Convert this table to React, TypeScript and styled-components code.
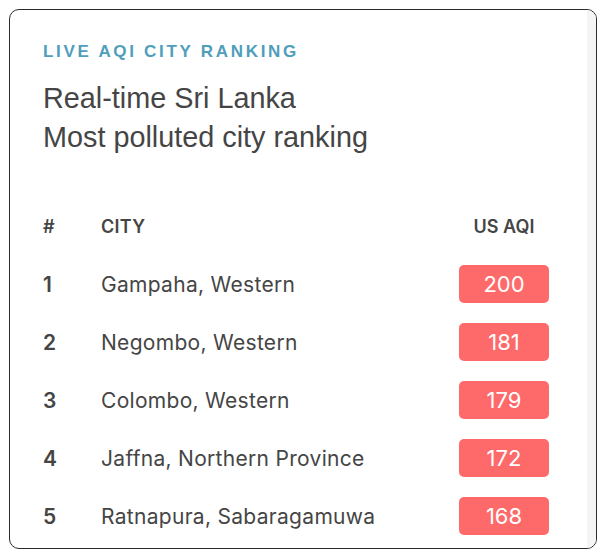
import { createGlobalStyle, styled } from "styled-components";

type CityRow = {
  rank: number;
  city: string;
  aqi: number;
};

const rows: CityRow[] = [
  { rank: 1, city: "Gampaha, Western", aqi: 200 },
  { rank: 2, city: "Negombo, Western", aqi: 181 },
  { rank: 3, city: "Colombo, Western", aqi: 179 },
  { rank: 4, city: "Jaffna, Northern Province", aqi: 172 },
  { rank: 5, city: "Ratnapura, Sabaragamuwa", aqi: 168 },
];

const App = () => {
  return (
    <>
      <GlobalStyle />
      <Card>
        <Content>
          <Eyebrow>LIVE AQI CITY RANKING</Eyebrow>
          <Title>
            Real-time Sri Lanka
            <br />
            Most polluted city ranking
          </Title>
          <Table>
            <HeadRow>
              <RankCell>#</RankCell>
              <CityCell>CITY</CityCell>
              <AqiCell>US AQI</AqiCell>
            </HeadRow>
            {rows.map((row) => (
              <BodyRow key={row.rank}>
                <RankCell>{row.rank}</RankCell>
                <CityCell>{row.city}</CityCell>
                <AqiCell>
                  <AqiBadge>{row.aqi}</AqiBadge>
                </AqiCell>
              </BodyRow>
            ))}
          </Table>
        </Content>
        <Gutter />
      </Card>
    </>
  );
};

export default App;

const GlobalStyle = createGlobalStyle`
  html, body {
    margin: 0;
    padding: 0;
    background: #ffffff;
  }
  body {
    font-family: "Liberation Sans", Arial, sans-serif;
  }
`;

const Card = styled.div`
  margin: 9px;
  width: 588px;
  height: 540px;
  box-sizing: border-box;
  border: 1px solid #2b2b2b;
  border-radius: 10px;
  overflow: hidden;
  display: flex;
  background: #ffffff;
`;

const Content = styled.div`
  flex: 1;
  padding: 32px 38px 0 33px;
  display: flex;
  flex-direction: column;
`;

const Gutter = styled.div`
  width: 9px;
  background: #f5f5f5;
`;

const Eyebrow = styled.div`
  font-family: "Liberation Sans", Arial, sans-serif;
  font-size: 17px;
  line-height: 20px;
  font-weight: 700;
  letter-spacing: 2.7px;
  color: #4f9ebb;
`;

const Title = styled.h1`
  margin: 17px 0 0;
  font-family: "Liberation Sans", Arial, sans-serif;
  font-size: 28.8px;
  line-height: 39px;
  font-weight: 400;
  color: #454545;
`;

const Table = styled.div`
  margin-top: 40px;
  display: flex;
  flex-direction: column;
  font-family: Inter, "Noto Sans", sans-serif;
  color: #454545;
`;

const Row = styled.div`
  height: 58px;
  display: grid;
  grid-template-columns: 58px 1fr 90px;
  align-items: center;
`;

const HeadRow = styled(Row)`
  font-size: 18px;
  font-weight: 600;
`;

const BodyRow = styled(Row)`
  font-size: 21px;
`;

const RankCell = styled.div`
  font-weight: 600;
`;

const CityCell = styled.div`
  letter-spacing: 0.3px;
`;

const AqiCell = styled.div`
  display: flex;
  justify-content: center;
`;

const AqiBadge = styled.div`
  width: 90px;
  height: 38px;
  border-radius: 5px;
  background: #fe6a6a;
  color: #ffffff;
  font-size: 22px;
  letter-spacing: 0;
  display: flex;
  align-items: center;
  justify-content: center;
`;
